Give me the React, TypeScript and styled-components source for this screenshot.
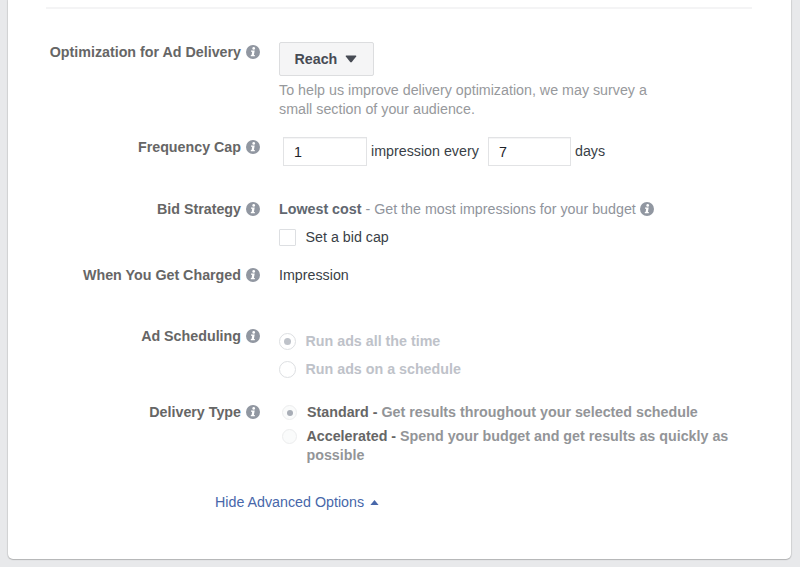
import React from "react";
import styled, { createGlobalStyle } from "styled-components";

const GlobalStyle = createGlobalStyle`
  *, *::before, *::after { box-sizing: border-box; }
  body {
    margin: 0;
    background: #e8e9eb;
    font-family: "Liberation Sans", Arial, sans-serif;
    font-size: 14.28px;
    line-height: 19px;
    color: #3a3f47;
  }
`;

const Page = styled.main`
  height: 567px;
  padding: 0 9px 8px 8px;
  overflow: hidden;
`;

const Card = styled.section`
  height: 559px;
  background: #fff;
  border-radius: 0 0 5px 5px;
  box-shadow: 0 0 1px 1px rgba(0, 0, 0, 0.09), 0 1px 1px rgba(0, 0, 0, 0.16);
  padding: 7px 39px 0 37px;
`;

const Divider = styled.hr`
  margin: 0 0 0 1px;
  border: 0;
  height: 2px;
  background: #f4f4f5;
`;

const Form = styled.div`
  display: grid;
  grid-template-columns: 215px 1fr;
  column-gap: 19px;
  grid-template-rows: 95px 62px 66px 61px 76px 84px;
  padding-top: 34px;
`;

const Label = styled.div`
  display: flex;
  justify-content: flex-end;
  align-items: flex-start;
  gap: 5px;
  height: 19px;
  font-weight: bold;
  color: #666;
  white-space: nowrap;
  svg { margin-top: 2px; }
`;

const Field = styled.div`
  white-space: nowrap;
`;

const IconSvg = styled.svg`
  display: block;
  flex: none;
`;

const SelectButton = styled.button`
  display: flex;
  align-items: center;
  gap: 8px;
  width: 95px;
  height: 34px;
  margin: -1px 0 5px;
  padding: 0 0 0 14.5px;
  border: 1px solid #dcdddf;
  border-radius: 2px;
  background: #f5f5f6;
  color: #474b54;
  font: bold 14.28px/19px "Liberation Sans", Arial, sans-serif;
`;

const Hint = styled.p`
  margin: 0;
  color: #97999c;
`;

const CapRow = styled.div`
  display: flex;
  align-items: center;
  gap: 4px;
  margin: -1px 0 0 4px;
  height: 29px;
`;

const CapText = styled.span<{ $width?: number }>`
  width: ${(p) => (p.$width ? `${p.$width}px` : "auto")};
  margin-top: -1px;
`;

const NumberInput = styled.input`
  width: 84px;
  height: 29px;
  padding: 1px 0 0 10px;
  border: 1px solid #e2e3e5;
  border-radius: 0;
  box-shadow: inset 0 1px 0 #f5f5f6;
  background: #fff;
  color: #1d2129;
  font: 14.28px/19px "Liberation Sans", Arial, sans-serif;
  outline: none;
  &:last-of-type { width: 83px; }
`;

const Strategy = styled.div`
  display: flex;
  align-items: flex-start;
  gap: 4.5px;
  height: 19px;
  color: #90949c;
  strong { color: #616770; }
  svg { margin-top: 2px; }
`;

const Choice = styled.label<{ $top?: number; $gap?: number; $inset?: number }>`
  display: flex;
  align-items: center;
  gap: ${(p) => p.$gap ?? 9.5}px;
  margin-top: ${(p) => p.$top ?? 0}px;
  margin-left: ${(p) => p.$inset ?? 0}px;
  height: 19px;
`;

const CheckSquare = styled.span`
  width: 17px;
  height: 17px;
  margin-top: -1px;
  border: 1px solid #dddfe2;
  border-radius: 1px;
`;

const Radio = styled.span<{ $size: number; $soft?: boolean; $on?: boolean }>`
  display: grid;
  place-items: center;
  flex: none;
  width: ${(p) => p.$size}px;
  height: ${(p) => p.$size}px;
  border: 1px solid ${(p) => (p.$soft ? "#ecedee" : "#dddfe2")};
  border-radius: 50%;
  background: ${(p) => (p.$soft ? "#fafbfb" : "#fff")};
  &::after {
    content: "";
    width: ${(p) => (p.$soft ? 6 : 7)}px;
    height: ${(p) => (p.$soft ? 6 : 7)}px;
    border-radius: 50%;
    background: ${(p) => (p.$on ? (p.$soft ? "#a8adb6" : "#bec2c9") : "transparent")};
  }
`;

const Muted = styled.strong`
  color: #bec2c9;
`;

const Description = styled.strong`
  color: #939598;
  b { color: #666; }
`;

const Continuation = styled.div`
  margin-left: 27.5px;
  font-weight: bold;
  color: #939598;
`;

const ToggleLink = styled.a`
  display: inline-flex;
  align-items: center;
  gap: 5.5px;
  margin: 6px 0 0 170px;
  color: #4867aa;
  text-decoration: none;
  white-space: nowrap;
`;

const InfoIcon = () => (
  <IconSvg width="14" height="14" viewBox="0 0 14 14">
    <circle cx="7" cy="7" r="7" fill="#9197a1" />
    <circle cx="7.7" cy="3.4" r="1.35" fill="#fff" />
    <path d="M5 5.5h3.7L7.9 10h.9v1.2H4.8V10h.8l.6-3.3H5z" fill="#fff" />
  </IconSvg>
);

const CaretDown = () => (
  <IconSvg width="12" height="8" viewBox="0 0 12 8">
    <path d="M1.2 .5h9.6q1 .3.4 1.1L6.8 7q-.8.8-1.6 0L.8 1.6Q.2.8 1.2.5z" fill="#474b54" />
  </IconSvg>
);

const CaretUp = () => (
  <IconSvg width="9" height="5" viewBox="0 0 9 5">
    <path d="M4.5 0L8.6 5H.4z" fill="#4867aa" />
  </IconSvg>
);

const FieldLabel = ({ children }: { children: React.ReactNode }) => (
  <Label>
    <span>{children}</span>
    <InfoIcon />
  </Label>
);

export default function App() {
  return (
    <Page>
      <GlobalStyle />
      <Card>
        <Divider />
        <Form>
          <FieldLabel>Optimization for Ad Delivery</FieldLabel>
          <Field>
            <SelectButton type="button">
              Reach
              <CaretDown />
            </SelectButton>
            <Hint>
              To help us improve delivery optimization, we may survey a
              <br />
              small section of your audience.
            </Hint>
          </Field>

          <FieldLabel>Frequency Cap</FieldLabel>
          <Field>
            <CapRow>
              <NumberInput defaultValue="1" />
              <CapText $width={113}>impression every</CapText>
              <NumberInput defaultValue="7" />
              <CapText>days</CapText>
            </CapRow>
          </Field>

          <FieldLabel>Bid Strategy</FieldLabel>
          <Field>
            <Strategy>
              <span>
                <strong>Lowest cost</strong> - Get the most impressions for your budget
              </span>
              <InfoIcon />
            </Strategy>
            <Choice $top={9}>
              <CheckSquare />
              Set a bid cap
            </Choice>
          </Field>

          <FieldLabel>When You Get Charged</FieldLabel>
          <Field>Impression</Field>

          <FieldLabel>Ad Scheduling</FieldLabel>
          <Field>
            <Choice $top={5}>
              <Radio $size={17} $on />
              <Muted>Run ads all the time</Muted>
            </Choice>
            <Choice $top={9}>
              <Radio $size={17} />
              <Muted>Run ads on a schedule</Muted>
            </Choice>
          </Field>

          <FieldLabel>Delivery Type</FieldLabel>
          <Field>
            <Choice $inset={3} $gap={10}>
              <Radio $size={15} $soft $on />
              <Description>
                <b>Standard -</b> Get results throughout your selected schedule
              </Description>
            </Choice>
            <Choice $inset={3} $gap={9.5} $top={5}>
              <Radio $size={15} $soft />
              <Description>
                <b>Accelerated -</b> Spend your budget and get results as quickly as
              </Description>
            </Choice>
            <Continuation>possible</Continuation>
          </Field>
        </Form>
        <ToggleLink href="#">
          Hide Advanced Options
          <CaretUp />
        </ToggleLink>
      </Card>
    </Page>
  );
}
